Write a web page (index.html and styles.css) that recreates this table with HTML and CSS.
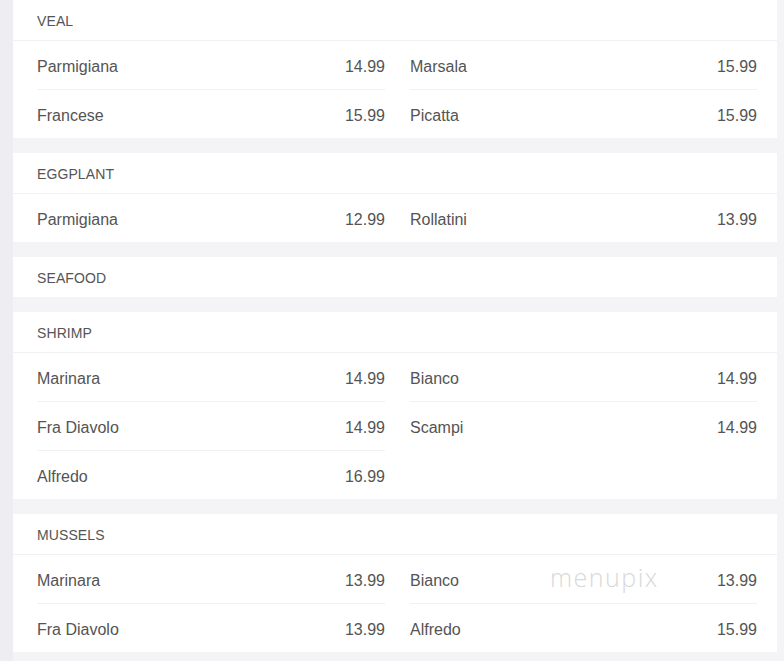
FILE: index.html
```html
<!DOCTYPE html>
<html>
<head>
<meta charset="utf-8">
<link rel="stylesheet" href="styles.css">
</head>
<body>
<div class="page">
  <div class="side"></div>
  <main class="menu">
    <section class="card">
      <div class="head">VEAL</div>
      <div class="row">
        <div class="item"><span>Parmigiana</span><span>14.99</span></div>
        <div class="item"><span>Marsala</span><span>15.99</span></div>
      </div>
      <div class="row">
        <div class="item"><span>Francese</span><span>15.99</span></div>
        <div class="item"><span>Picatta</span><span>15.99</span></div>
      </div>
    </section>
    <section class="card">
      <div class="head">EGGPLANT</div>
      <div class="row">
        <div class="item"><span>Parmigiana</span><span>12.99</span></div>
        <div class="item"><span>Rollatini</span><span>13.99</span></div>
      </div>
    </section>
    <section class="card">
      <div class="head solo">SEAFOOD</div>
    </section>
    <section class="card">
      <div class="head">SHRIMP</div>
      <div class="row">
        <div class="item"><span>Marinara</span><span>14.99</span></div>
        <div class="item"><span>Bianco</span><span>14.99</span></div>
      </div>
      <div class="row">
        <div class="item"><span>Fra Diavolo</span><span>14.99</span></div>
        <div class="item"><span>Scampi</span><span>14.99</span></div>
      </div>
      <div class="row">
        <div class="item"><span>Alfredo</span><span>16.99</span></div>
      </div>
    </section>
    <section class="card last">
      <div class="head">MUSSELS</div>
      <div class="row">
        <div class="item"><span>Marinara</span><span>13.99</span></div>
        <div class="item"><span>Bianco</span><span>13.99</span></div>
      </div>
      <div class="row">
        <div class="item"><span>Fra Diavolo</span><span>13.99</span></div>
        <div class="item"><span>Alfredo</span><span>15.99</span></div>
      </div>
      <div class="mark">menupix</div>
    </section>
  </main>
</div>
</body>
</html>
```

FILE: styles.css
```css
html, body {
  margin: 0;
  padding: 0;
  background: #f4f4f6;
  font-family: "Liberation Sans", Arial, sans-serif;
  color: #555;
}
.page {
  display: flex;
  width: 784px;
  height: 661px;
  overflow: hidden;
}
.side {
  width: 13px;
  flex: none;
  background: #ededf2;
}
.menu {
  width: 764px;
  flex: none;
  display: flex;
  flex-direction: column;
  gap: 15px;
}
.card {
  position: relative;
  background: #fff;
}
.head {
  box-sizing: border-box;
  height: 41px;
  padding-top: 2px;
  border-bottom: 1px solid #f1f1f3;
  padding-left: 24px;
  display: flex;
  align-items: center;
  font-size: 14px;
  color: #555;
  letter-spacing: 0.1px;
}
.head.solo {
  border-bottom: none;
  height: 40px;
}
.row {
  display: grid;
  grid-template-columns: 348px 347px;
  column-gap: 25px;
  padding: 0 20px 0 24px;
}
.item {
  box-sizing: border-box;
  height: 48px;
  padding-top: 3px;
  display: flex;
  justify-content: space-between;
  align-items: center;
  font-size: 16px;
  color: #545454;
}
.row + .row .item {
  height: 49px;
  border-top: 1px solid #f1f1f3;
}
.mark {
  position: absolute;
  left: 537px;
  top: 46px;
  font-family: "Open Sans", sans-serif;
  font-weight: 300;
  font-size: 25px;
  letter-spacing: 1.5px;
  color: #d9d9d9;
}
```
